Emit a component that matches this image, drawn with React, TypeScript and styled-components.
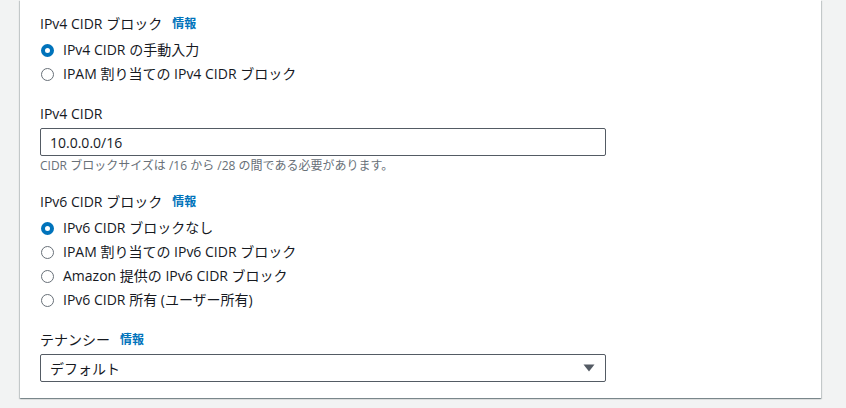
import React from "react";
import styled, { createGlobalStyle } from "styled-components";

const GlobalStyle = createGlobalStyle`
  * {
    box-sizing: border-box;
  }
  body {
    margin: 0;
    background-color: #f2f3f3;
    font-family: "Open Sans", "Noto Sans CJK JP", sans-serif;
    color: #16191f;
  }
`;

type Option = { label: string; checked?: boolean };

const ipv4Options: Option[] = [
  { label: "IPv4 CIDR の手動入力", checked: true },
  { label: "IPAM 割り当ての IPv4 CIDR ブロック" },
];

const ipv6Options: Option[] = [
  { label: "IPv6 CIDR ブロックなし", checked: true },
  { label: "IPAM 割り当ての IPv6 CIDR ブロック" },
  { label: "Amazon 提供の IPv6 CIDR ブロック" },
  { label: "IPv6 CIDR 所有 (ユーザー所有)" },
];

const RadioGroup = ({ options }: { options: Option[] }) => (
  <Radios>
    {options.map((o) => (
      <RadioRow key={o.label}>
        <RadioCircle $checked={!!o.checked} />
        <RadioText>{o.label}</RadioText>
      </RadioRow>
    ))}
  </Radios>
);

const App = () => {
  return (
    <Page>
      <GlobalStyle />
      <Card>
        <Field>
          <Label>
            IPv4 CIDR ブロック<InfoLink>情報</InfoLink>
          </Label>
          <RadioGroup options={ipv4Options} />
        </Field>

        <Field>
          <Label>IPv4 CIDR</Label>
          <Input>10.0.0.0/16</Input>
          <Hint>CIDR ブロックサイズは /16 から /28 の間である必要があります。</Hint>
        </Field>

        <Field>
          <Label>
            IPv6 CIDR ブロック<InfoLink>情報</InfoLink>
          </Label>
          <RadioGroup options={ipv6Options} />
        </Field>

        <Field>
          <Label>
            テナンシー<InfoLink>情報</InfoLink>
          </Label>
          <Select>
            <span>デフォルト</span>
            <svg width="12" height="8" viewBox="0 0 12 8">
              <path d="M0.5 0.5 H11.5 L6 7.5 Z" fill="#545b64" />
            </svg>
          </Select>
        </Field>
      </Card>
    </Page>
  );
};

export default App;

const Page = styled.div`
  padding: 0 25px 11px 20px;
`;

const Card = styled.div`
  background-color: #fff;
  box-shadow: 0 1px 1px 0 rgba(0, 28, 36, 0.3),
    1px 1px 1px 0 rgba(0, 28, 36, 0.15), -1px 1px 1px 0 rgba(0, 28, 36, 0.15);
  padding: 13px 20px 16px 20px;
  display: flex;
  flex-direction: column;
  gap: 17px;
`;

const Field = styled.div`
  display: flex;
  flex-direction: column;
  align-items: flex-start;
`;

const Label = styled.div`
  font-size: 14px;
  line-height: 22px;
  height: 22px;
  margin-bottom: 3px;
  display: flex;
  align-items: center;
`;

const InfoLink = styled.span`
  color: #0073bb;
  font-size: 12px;
  font-weight: 700;
  margin-left: 10px;
`;

const Radios = styled.div`
  display: flex;
  flex-direction: column;
`;

const RadioRow = styled.div`
  display: flex;
  align-items: center;
  height: 24px;
  padding-left: 1px;
`;

const RadioCircle = styled.span<{ $checked: boolean }>`
  width: 13px;
  height: 13px;
  border-radius: 50%;
  flex-shrink: 0;
  background-color: #fff;
  border: ${(p) => (p.$checked ? "4px solid #0073bb" : "1.5px solid #687078")};
`;

const RadioText = styled.span`
  font-size: 14px;
  line-height: 20px;
  margin-left: 9px;
`;

const Input = styled.div`
  width: 566px;
  height: 28px;
  border: 1px solid #545b64;
  border-radius: 2px;
  padding: 0 9px;
  font-size: 14px;
  display: flex;
  align-items: center;
`;

const Hint = styled.div`
  font-size: 12px;
  line-height: 16px;
  height: 16px;
  color: #687078;
  margin-top: 2px;
`;

const Select = styled(Input)`
  justify-content: space-between;
  padding-right: 10px;
`;
